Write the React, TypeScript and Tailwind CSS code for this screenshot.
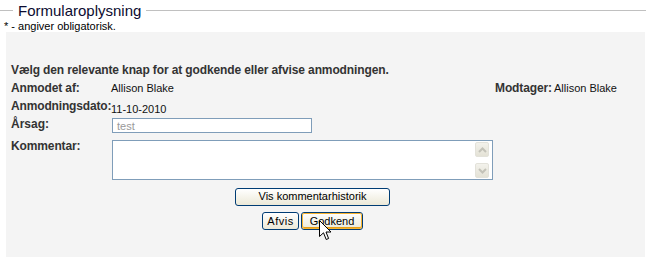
import React from 'react';

const font = { fontFamily: '"Liberation Sans", Arial, sans-serif' };

// XP style push button
const XpButton: React.FC<{ label: string; className?: string; hover?: boolean }> = ({ label, className = '', hover }) => (
  <button
    className={`h-[18px] rounded-[3px] border border-[#003c74] bg-gradient-to-b from-white to-[#ece9d8] text-[11px] leading-none text-[#000] ${className}`}
  >
    <span
      className={`flex h-full w-full items-center justify-center rounded-[2px] ${
        hover ? 'border border-[#f8b330] shadow-[inset_0_-1px_0_#e5a01a]' : ''
      }`}
    >
      {label}
    </span>
  </button>
);

const ScrollArrow: React.FC<{ up?: boolean }> = ({ up }) => (
  <div className="flex h-[15px] w-[14px] items-center justify-center rounded-[2px] border border-[#e3e2da] bg-gradient-to-b from-[#f3f2ec] to-[#e4e2d6]">
    <svg width="9" height="6" viewBox="0 0 9 6">
      <path
        d={up ? 'M1 5 L4.5 1.5 L8 5' : 'M1 1 L4.5 4.5 L8 1'}
        fill="none"
        stroke="#c3c2b8"
        strokeWidth="2"
      />
    </svg>
  </div>
);

export default function App() {
  return (
    <div className="relative h-[257px] w-[646px] overflow-hidden bg-white" style={font}>
      {/* legend */}
      <div className="flex h-[20px] items-center">
        <div className="h-px w-[13px] bg-[#c0c0c0]" />
        <span className="px-[5px] text-[15px] leading-none text-[#0b0b30]">Formularoplysning</span>
        <div className="h-px flex-1 bg-[#c0c0c0]" />
      </div>
      <div className="h-[12px] pl-[4px] text-[11px] leading-[12px] text-[#000]">* - angiver obligatorisk.</div>

      {/* panel */}
      <div className="ml-[6px] h-[225px] w-[639px] bg-[#f4f4f4] pl-[5px] pt-[31px] text-[#333]">
        <div className="h-[18px] text-[12px] font-bold leading-[14px] tracking-[-0.12px]">
          Vælg den relevante knap for at godkende eller afvise anmodningen.
        </div>

        <div className="flex h-[18px] items-start leading-[14px]">
          <div className="w-[100px] text-[12px] font-bold tracking-[-0.12px]">Anmodet af:</div>
          <div className="w-[384px] text-[11px] text-[#111]">Allison Blake</div>
          <div className="w-[59px] text-[12px] font-bold tracking-[-0.12px]">Modtager:</div>
          <div className="text-[11px] text-[#111]">Allison Blake</div>
        </div>

        <div className="flex h-[18px] items-start leading-[14px]">
          <div className="w-[100px] text-[12px] font-bold tracking-[-0.15px]">Anmodningsdato:</div>
          <div className="mt-[3px] text-[11px] text-[#111]">11-10-2010</div>
        </div>

        <div className="flex h-[22px] items-start leading-[14px]">
          <div className="w-[101px] text-[12px] font-bold">Årsag:</div>
          <div className="mt-[1px] flex h-[15px] w-[200px] items-center border border-[#7f9db9] bg-white pl-[4px] text-[11px] text-[#999]">
            test
          </div>
        </div>

        <div className="flex h-[44px] items-start leading-[14px]">
          <div className="w-[101px] text-[12px] font-bold tracking-[-0.12px]">Kommentar:</div>
          <div className="mt-[1px] flex h-[40px] w-[381px] justify-end border border-[#7f9db9] bg-white">
            <div className="flex h-full w-[17px] flex-col justify-between py-[1px] pr-[1px]">
              <ScrollArrow up />
              <ScrollArrow />
            </div>
          </div>
        </div>

        <div className="ml-[224px]">
          <XpButton label="Vis kommentarhistorik" className="w-[155px]" />
        </div>

        <div className="mt-[5px] flex w-[603px] justify-center gap-[2px]">
          <XpButton label="Afvis" className="w-[37px] tracking-[0.5px]" />
          <XpButton label="Godkend" className="w-[62px]" hover />
        </div>
      </div>

      {/* mouse cursor */}
      <svg className="absolute left-[319px] top-[220px]" width="13" height="21" viewBox="0 0 13 21">
        <path
          d="M0.5 0.5 L0.5 16.5 L4.5 12.8 L7.2 19.5 L9.6 18.5 L7 12 L12 12 Z"
          fill="#fff"
          stroke="#000"
          strokeWidth="1"
          strokeLinejoin="miter"
        />
      </svg>
    </div>
  );
}
